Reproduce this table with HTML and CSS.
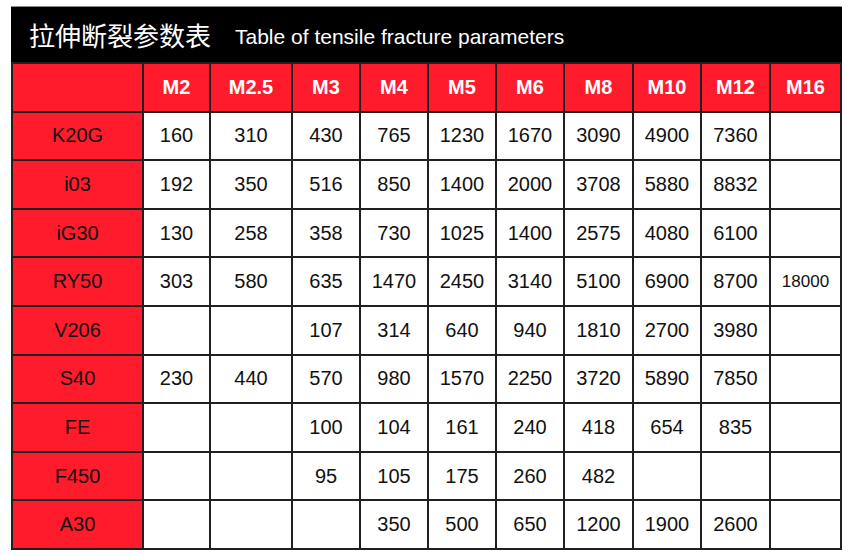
FILE: index.html
```html
<!DOCTYPE html>
<html>
<head>
<meta charset="utf-8">
<link rel="stylesheet" href="styles.css">
</head>
<body>
<div class="sheet">
  <div class="title">
    <span class="title-cn">拉伸断裂参数表</span>
    <span class="title-en">Table of tensile fracture parameters</span>
  </div>
  <table class="grid">
    <colgroup>
      <col class="c-name"><col class="c67"><col class="c82"><col class="c68"><col class="c68"><col class="c68"><col class="c68"><col class="c69"><col class="c68"><col class="c69"><col class="c71">
    </colgroup>
    <tr class="head">
      <th class="name"></th><th>M2</th><th>M2.5</th><th>M3</th><th>M4</th><th>M5</th><th>M6</th><th>M8</th><th>M10</th><th>M12</th><th>M16</th>
    </tr>
    <tr><th class="name">K20G</th><td>160</td><td>310</td><td>430</td><td>765</td><td>1230</td><td>1670</td><td>3090</td><td>4900</td><td>7360</td><td></td></tr>
    <tr><th class="name">i03</th><td>192</td><td>350</td><td>516</td><td>850</td><td>1400</td><td>2000</td><td>3708</td><td>5880</td><td>8832</td><td></td></tr>
    <tr><th class="name">iG30</th><td>130</td><td>258</td><td>358</td><td>730</td><td>1025</td><td>1400</td><td>2575</td><td>4080</td><td>6100</td><td></td></tr>
    <tr><th class="name">RY50</th><td>303</td><td>580</td><td>635</td><td>1470</td><td>2450</td><td>3140</td><td>5100</td><td>6900</td><td>8700</td><td class="small">18000</td></tr>
    <tr><th class="name">V206</th><td></td><td></td><td>107</td><td>314</td><td>640</td><td>940</td><td>1810</td><td>2700</td><td>3980</td><td></td></tr>
    <tr><th class="name">S40</th><td>230</td><td>440</td><td>570</td><td>980</td><td>1570</td><td>2250</td><td>3720</td><td>5890</td><td>7850</td><td></td></tr>
    <tr><th class="name">FE</th><td></td><td></td><td>100</td><td>104</td><td>161</td><td>240</td><td>418</td><td>654</td><td>835</td><td></td></tr>
    <tr><th class="name">F450</th><td></td><td></td><td>95</td><td>105</td><td>175</td><td>260</td><td>482</td><td></td><td></td><td></td></tr>
    <tr><th class="name">A30</th><td></td><td></td><td></td><td>350</td><td>500</td><td>650</td><td>1200</td><td>1900</td><td>2600</td><td></td></tr>
  </table>
</div>
</body>
</html>
```
FILE: styles.css
```css
html, body {
  margin: 0;
  padding: 0;
  background: #ffffff;
}
body {
  font-family: "Liberation Sans", Arial, "Noto Sans CJK SC", sans-serif;
}
.sheet {
  width: 831px;
  margin: 6px 0 0 11px;
}
.title {
  background: #000000;
  border-top: 1px solid #8a8a8a;
  display: flex;
  align-items: center;
  padding-left: 18px;
  color: #ffffff;
  box-sizing: border-box;
  height: 56px;
}
.title-cn {
  font-family: "Noto Sans CJK SC", sans-serif;
  font-size: 26px;
  line-height: 1;
}
.title-en {
  font-size: 21px;
  margin-left: 24px;
  line-height: 1;
  padding-top: 3px;
}
.grid {
  border-collapse: collapse;
  table-layout: fixed;
  width: 831px;
}
.c-name { width: 131px; }
.c67 { width: 67px; }
.c82 { width: 82px; }
.c68 { width: 68px; }
.c69 { width: 69px; }
.c71 { width: 71px; }
.grid th, .grid td {
  border: 2px solid #202020;
  height: 48.6px;
  padding: 0;
  text-align: center;
  vertical-align: middle;
  box-sizing: border-box;
  font-size: 20px;
  color: #111111;
}
.grid td {
  background: #ffffff;
}
.grid th {
  font-weight: normal;
}
.grid .name {
  background: #fe1b2c;
}
.head th {
  background: #fe1b2c;
  color: #ffffff;
  font-weight: bold;
  font-size: 20px;
}
.grid td.small {
  font-size: 17px;
}
```
